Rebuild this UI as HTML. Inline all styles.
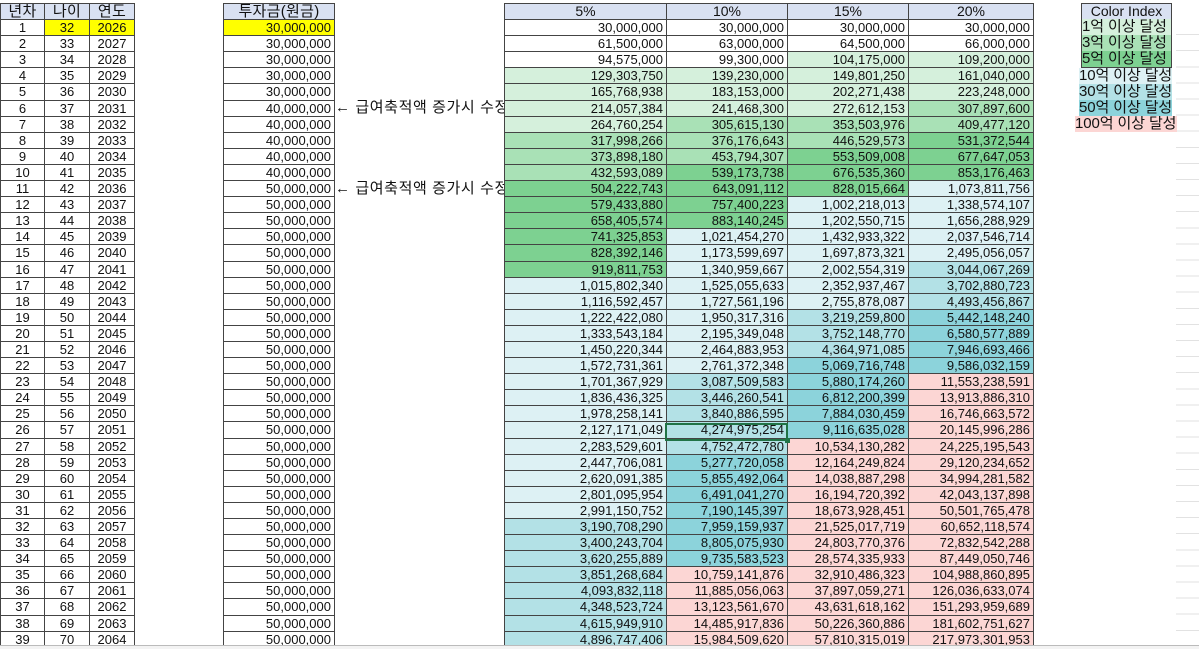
<!DOCTYPE html>
<html><head><meta charset="utf-8">
<style>
*{margin:0;padding:0;box-sizing:border-box}
body{width:1199px;height:649px;overflow:hidden;background:#fff;position:relative;font-family:"Liberation Sans","Noto Sans CJK KR",sans-serif;font-size:13px;color:#111}
.g{position:absolute;display:grid;grid-auto-rows:16.1px;border-left:1px solid #444;border-top:1px solid #444}
.g>div{border-right:1px solid #444;border-bottom:1px solid #444;line-height:15px;white-space:nowrap;overflow:hidden;text-align:right;padding-right:3px}
.g>div.h{background:#d9e1f2;text-align:center;padding:0;font-size:14px}
.k{font-size:15px!important;letter-spacing:0.3px}
.c{text-align:center!important;padding:0!important}
.y{background:#ffff00}
.a{background:#d5f0dc}.b{background:#a9e1b6}.cc{background:#7dd191}
.d{background:#ddf1f4}.e{background:#b3e1e6}.f{background:#8cd3db}.p{background:#fcd6d4}
#t1{left:0;top:3px;grid-template-columns:44px 45px 45px}
#t2{left:223px;top:3px;grid-template-columns:111px}
#t3{left:504px;top:3px;grid-template-columns:162px 121px 121px 125px;z-index:2}
.lab{position:absolute;left:335px;font-size:15px;line-height:16px;z-index:1;letter-spacing:0.6px;white-space:nowrap}
.sel{position:absolute;left:665px;top:423px;width:123px;height:18px;border:2px solid #217346;z-index:3}
.sel:after{content:"";position:absolute;right:-4px;bottom:-4px;width:5px;height:5px;background:#217346}
.right{position:absolute;left:1176px;top:19px;width:23px;height:626px;background:repeating-linear-gradient(to bottom,transparent 0,transparent 15.1px,#e2e2e2 15.1px,#e2e2e2 16.1px)}
.bot{position:absolute;left:0;top:645px;width:1199px;height:4px;border-top:1px solid #bbb;background:#f3f3f3;z-index:5}
.ci{position:absolute;height:16px;line-height:16px;font-size:15px;letter-spacing:-0.1px;white-space:nowrap;overflow:hidden}
</style></head><body>
<div class="right"></div>
<div class="g" id="t1">
<div class="h k">년차</div><div class="h k">나이</div><div class="h k">연도</div>
<div class="c">1</div><div class="c y">32</div><div class="c y">2026</div>
<div class="c">2</div><div class="c">33</div><div class="c">2027</div>
<div class="c">3</div><div class="c">34</div><div class="c">2028</div>
<div class="c">4</div><div class="c">35</div><div class="c">2029</div>
<div class="c">5</div><div class="c">36</div><div class="c">2030</div>
<div class="c">6</div><div class="c">37</div><div class="c">2031</div>
<div class="c">7</div><div class="c">38</div><div class="c">2032</div>
<div class="c">8</div><div class="c">39</div><div class="c">2033</div>
<div class="c">9</div><div class="c">40</div><div class="c">2034</div>
<div class="c">10</div><div class="c">41</div><div class="c">2035</div>
<div class="c">11</div><div class="c">42</div><div class="c">2036</div>
<div class="c">12</div><div class="c">43</div><div class="c">2037</div>
<div class="c">13</div><div class="c">44</div><div class="c">2038</div>
<div class="c">14</div><div class="c">45</div><div class="c">2039</div>
<div class="c">15</div><div class="c">46</div><div class="c">2040</div>
<div class="c">16</div><div class="c">47</div><div class="c">2041</div>
<div class="c">17</div><div class="c">48</div><div class="c">2042</div>
<div class="c">18</div><div class="c">49</div><div class="c">2043</div>
<div class="c">19</div><div class="c">50</div><div class="c">2044</div>
<div class="c">20</div><div class="c">51</div><div class="c">2045</div>
<div class="c">21</div><div class="c">52</div><div class="c">2046</div>
<div class="c">22</div><div class="c">53</div><div class="c">2047</div>
<div class="c">23</div><div class="c">54</div><div class="c">2048</div>
<div class="c">24</div><div class="c">55</div><div class="c">2049</div>
<div class="c">25</div><div class="c">56</div><div class="c">2050</div>
<div class="c">26</div><div class="c">57</div><div class="c">2051</div>
<div class="c">27</div><div class="c">58</div><div class="c">2052</div>
<div class="c">28</div><div class="c">59</div><div class="c">2053</div>
<div class="c">29</div><div class="c">60</div><div class="c">2054</div>
<div class="c">30</div><div class="c">61</div><div class="c">2055</div>
<div class="c">31</div><div class="c">62</div><div class="c">2056</div>
<div class="c">32</div><div class="c">63</div><div class="c">2057</div>
<div class="c">33</div><div class="c">64</div><div class="c">2058</div>
<div class="c">34</div><div class="c">65</div><div class="c">2059</div>
<div class="c">35</div><div class="c">66</div><div class="c">2060</div>
<div class="c">36</div><div class="c">67</div><div class="c">2061</div>
<div class="c">37</div><div class="c">68</div><div class="c">2062</div>
<div class="c">38</div><div class="c">69</div><div class="c">2063</div>
<div class="c">39</div><div class="c">70</div><div class="c">2064</div>
</div>

<div class="g" id="t2">
<div class="h k">투자금(원금)</div>
<div class="y">30,000,000</div><div>30,000,000</div><div>30,000,000</div><div>30,000,000</div><div>30,000,000</div>
<div>40,000,000</div><div>40,000,000</div><div>40,000,000</div><div>40,000,000</div><div>40,000,000</div>
<div>50,000,000</div><div>50,000,000</div><div>50,000,000</div><div>50,000,000</div><div>50,000,000</div>
<div>50,000,000</div><div>50,000,000</div><div>50,000,000</div><div>50,000,000</div><div>50,000,000</div>
<div>50,000,000</div><div>50,000,000</div><div>50,000,000</div><div>50,000,000</div><div>50,000,000</div>
<div>50,000,000</div><div>50,000,000</div><div>50,000,000</div><div>50,000,000</div><div>50,000,000</div>
<div>50,000,000</div><div>50,000,000</div><div>50,000,000</div><div>50,000,000</div><div>50,000,000</div>
<div>50,000,000</div><div>50,000,000</div><div>50,000,000</div><div>50,000,000</div>
</div>

<div class="lab" style="top:100px">← 급여축적액 증가시 수정</div>
<div class="lab" style="top:181px">← 급여축적액 증가시 수정</div>

<div class="g" id="t3">
<div class="h">5%</div><div class="h">10%</div><div class="h">15%</div><div class="h">20%</div>
<div>30,000,000</div><div>30,000,000</div><div>30,000,000</div><div>30,000,000</div>
<div>61,500,000</div><div>63,000,000</div><div>64,500,000</div><div>66,000,000</div>
<div>94,575,000</div><div>99,300,000</div><div class="a">104,175,000</div><div class="a">109,200,000</div>
<div class="a">129,303,750</div><div class="a">139,230,000</div><div class="a">149,801,250</div><div class="a">161,040,000</div>
<div class="a">165,768,938</div><div class="a">183,153,000</div><div class="a">202,271,438</div><div class="a">223,248,000</div>
<div class="a">214,057,384</div><div class="a">241,468,300</div><div class="a">272,612,153</div><div class="b">307,897,600</div>
<div class="a">264,760,254</div><div class="b">305,615,130</div><div class="b">353,503,976</div><div class="b">409,477,120</div>
<div class="b">317,998,266</div><div class="b">376,176,643</div><div class="b">446,529,573</div><div class="cc">531,372,544</div>
<div class="b">373,898,180</div><div class="b">453,794,307</div><div class="cc">553,509,008</div><div class="cc">677,647,053</div>
<div class="b">432,593,089</div><div class="cc">539,173,738</div><div class="cc">676,535,360</div><div class="cc">853,176,463</div>
<div class="cc">504,222,743</div><div class="cc">643,091,112</div><div class="cc">828,015,664</div><div class="d">1,073,811,756</div>
<div class="cc">579,433,880</div><div class="cc">757,400,223</div><div class="d">1,002,218,013</div><div class="d">1,338,574,107</div>
<div class="cc">658,405,574</div><div class="cc">883,140,245</div><div class="d">1,202,550,715</div><div class="d">1,656,288,929</div>
<div class="cc">741,325,853</div><div class="d">1,021,454,270</div><div class="d">1,432,933,322</div><div class="d">2,037,546,714</div>
<div class="cc">828,392,146</div><div class="d">1,173,599,697</div><div class="d">1,697,873,321</div><div class="d">2,495,056,057</div>
<div class="cc">919,811,753</div><div class="d">1,340,959,667</div><div class="d">2,002,554,319</div><div class="e">3,044,067,269</div>
<div class="d">1,015,802,340</div><div class="d">1,525,055,633</div><div class="d">2,352,937,467</div><div class="e">3,702,880,723</div>
<div class="d">1,116,592,457</div><div class="d">1,727,561,196</div><div class="d">2,755,878,087</div><div class="e">4,493,456,867</div>
<div class="d">1,222,422,080</div><div class="d">1,950,317,316</div><div class="e">3,219,259,800</div><div class="f">5,442,148,240</div>
<div class="d">1,333,543,184</div><div class="d">2,195,349,048</div><div class="e">3,752,148,770</div><div class="f">6,580,577,889</div>
<div class="d">1,450,220,344</div><div class="d">2,464,883,953</div><div class="e">4,364,971,085</div><div class="f">7,946,693,466</div>
<div class="d">1,572,731,361</div><div class="d">2,761,372,348</div><div class="f">5,069,716,748</div><div class="f">9,586,032,159</div>
<div class="d">1,701,367,929</div><div class="e">3,087,509,583</div><div class="f">5,880,174,260</div><div class="p">11,553,238,591</div>
<div class="d">1,836,436,325</div><div class="e">3,446,260,541</div><div class="f">6,812,200,399</div><div class="p">13,913,886,310</div>
<div class="d">1,978,258,141</div><div class="e">3,840,886,595</div><div class="f">7,884,030,459</div><div class="p">16,746,663,572</div>
<div class="d">2,127,171,049</div><div class="e">4,274,975,254</div><div class="f">9,116,635,028</div><div class="p">20,145,996,286</div>
<div class="d">2,283,529,601</div><div class="e">4,752,472,780</div><div class="p">10,534,130,282</div><div class="p">24,225,195,543</div>
<div class="d">2,447,706,081</div><div class="f">5,277,720,058</div><div class="p">12,164,249,824</div><div class="p">29,120,234,652</div>
<div class="d">2,620,091,385</div><div class="f">5,855,492,064</div><div class="p">14,038,887,298</div><div class="p">34,994,281,582</div>
<div class="d">2,801,095,954</div><div class="f">6,491,041,270</div><div class="p">16,194,720,392</div><div class="p">42,043,137,898</div>
<div class="d">2,991,150,752</div><div class="f">7,190,145,397</div><div class="p">18,673,928,451</div><div class="p">50,501,765,478</div>
<div class="e">3,190,708,290</div><div class="f">7,959,159,937</div><div class="p">21,525,017,719</div><div class="p">60,652,118,574</div>
<div class="e">3,400,243,704</div><div class="f">8,805,075,930</div><div class="p">24,803,770,376</div><div class="p">72,832,542,288</div>
<div class="e">3,620,255,889</div><div class="f">9,735,583,523</div><div class="p">28,574,335,933</div><div class="p">87,449,050,746</div>
<div class="e">3,851,268,684</div><div class="p">10,759,141,876</div><div class="p">32,910,486,323</div><div class="p">104,988,860,895</div>
<div class="e">4,093,832,118</div><div class="p">11,885,056,063</div><div class="p">37,897,059,271</div><div class="p">126,036,633,074</div>
<div class="e">4,348,523,724</div><div class="p">13,123,561,670</div><div class="p">43,631,618,162</div><div class="p">151,293,959,689</div>
<div class="e">4,615,949,910</div><div class="p">14,485,917,836</div><div class="p">50,226,360,886</div><div class="p">181,602,751,627</div>
<div class="e">4,896,747,406</div><div class="p">15,984,509,620</div><div class="p">57,810,315,019</div><div class="p">217,973,301,953</div>
</div>
<div class="sel"></div>

<div style="position:absolute;left:1081px;top:3px;width:91px;height:17px;border:1px solid #444;background:#d9e1f2;text-align:center;line-height:15px;font-size:14px">Color Index</div>
<div style="position:absolute;left:1081px;top:19px;width:91px;height:49px;border:1px solid #444;border-top:none;z-index:2"></div>
<div class="ci" style="left:1082px;top:19px;width:89px;background:#d5f0dc">1억 이상 달성</div>
<div class="ci" style="left:1082px;top:35px;width:89px;background:#a9e1b6">3억 이상 달성</div>
<div class="ci" style="left:1082px;top:51px;width:89px;background:#7dd191">5억 이상 달성</div>
<div class="ci" style="left:1079px;top:68px;width:93px;background:#ddf1f4">10억 이상 달성</div>
<div class="ci" style="left:1079px;top:84px;width:93px;background:#b3e1e6">30억 이상 달성</div>
<div class="ci" style="left:1079px;top:100px;width:93px;background:#8cd3db">50억 이상 달성</div>
<div class="ci" style="left:1075px;top:116px;width:102px;background:#fcd6d4">100억 이상 달성</div>
<div class="bot"></div>
</body></html>
